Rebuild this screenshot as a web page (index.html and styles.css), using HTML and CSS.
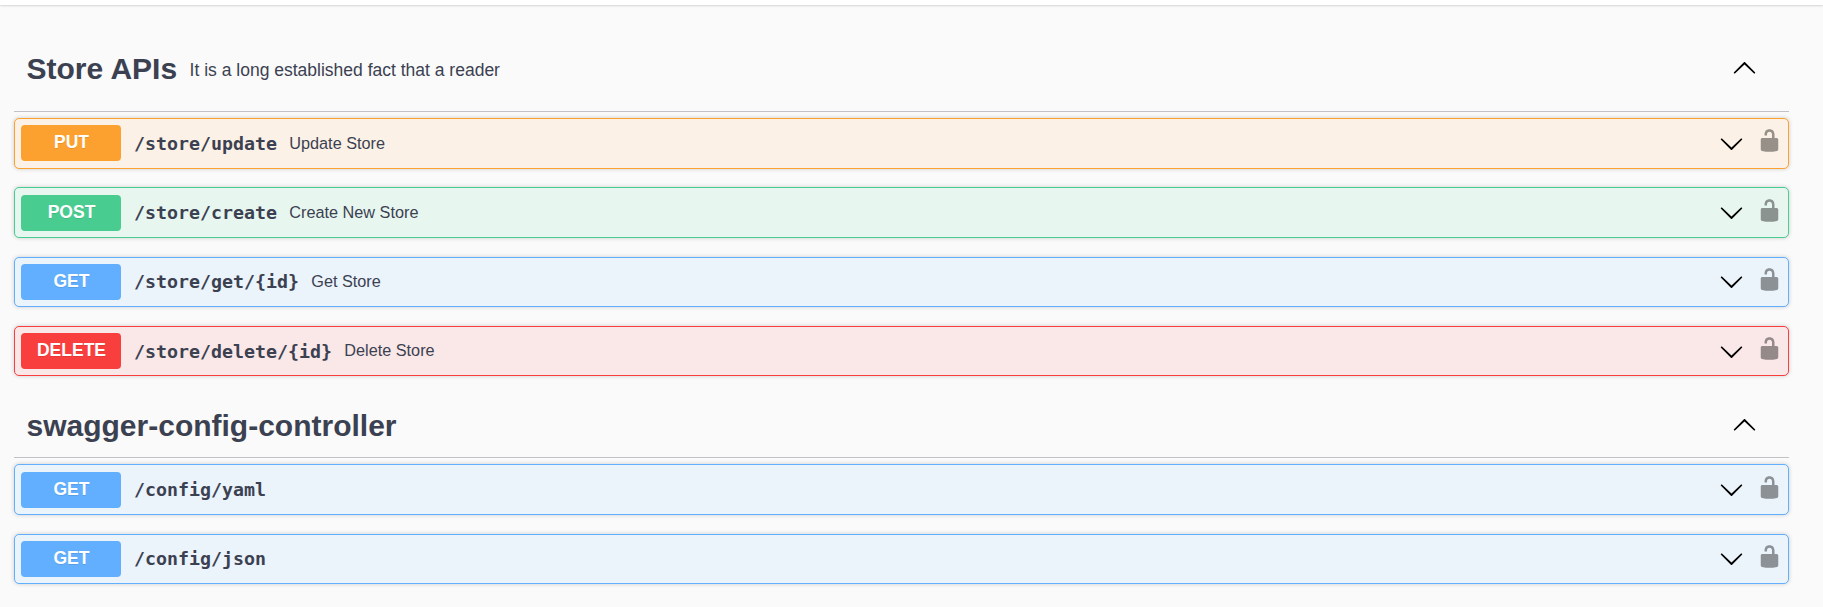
FILE: index.html
```html
<!DOCTYPE html>
<html lang="en">
<head>
<meta charset="utf-8">
<title>Store APIs</title>
<link rel="stylesheet" href="styles.css">
</head>
<body>
<svg class="sprite" aria-hidden="true">
  <symbol id="up" viewBox="0 0 20 20"><path d="M2.582 13.891c-.272.268-.709.268-.979 0s-.271-.701 0-.969l7.908-7.83c.27-.268.707-.268.979 0l7.908 7.83c.27.268.27.701 0 .969c-.271.268-.709.268-.978 0L10 6.75z"/></symbol>
  <symbol id="down" viewBox="0 0 20 20"><path d="M17.418 6.109c.272-.268.709-.268.979 0s.271.701 0 .969l-7.908 7.83c-.27.268-.707.268-.979 0l-7.908-7.83c-.27-.268-.27-.701 0-.969.271-.268.709-.268.979 0L10 13.25z"/></symbol>
  <symbol id="unlocked" viewBox="0 0 20 20"><path d="M15.8 8H14V5.6C14 2.703 12.665 1 10 1 7.334 1 6 2.703 6 5.6V6h2v-.801C8 3.754 8.797 3 10 3c1.203 0 2 .754 2 2.199V8H4c-.553 0-1 .646-1 1.199V17c0 .549.428 1.139.951 1.307l1.197.387C5.672 18.861 6.55 19 7.1 19h5.8c.549 0 1.428-.139 1.951-.307l1.196-.387c.524-.167.953-.757.953-1.306V9.199C17 8.646 16.352 8 15.8 8z"/></symbol>
</svg>
<div class="topbar"></div>
<main class="wrapper">
  <section class="tag-section">
    <header class="tag tag-tall">
      <h3 class="tag-name">Store APIs</h3>
      <p class="tag-desc">It is a long established fact that a reader</p>
      <svg class="icon tag-arrow"><use href="#up"/></svg>
    </header>
    <div class="operations">
      <div class="op put"><span class="method">PUT</span><span class="path">/store/update</span><span class="summary">Update Store</span><svg class="icon arrow"><use href="#down"/></svg><svg class="icon lock"><use href="#unlocked"/></svg></div>
      <div class="op post"><span class="method">POST</span><span class="path">/store/create</span><span class="summary">Create New Store</span><svg class="icon arrow"><use href="#down"/></svg><svg class="icon lock"><use href="#unlocked"/></svg></div>
      <div class="op get"><span class="method">GET</span><span class="path">/store/get/{id}</span><span class="summary">Get Store</span><svg class="icon arrow"><use href="#down"/></svg><svg class="icon lock"><use href="#unlocked"/></svg></div>
      <div class="op delete"><span class="method">DELETE</span><span class="path">/store/delete/{id}</span><span class="summary">Delete Store</span><svg class="icon arrow"><use href="#down"/></svg><svg class="icon lock"><use href="#unlocked"/></svg></div>
    </div>
  </section>
  <section class="tag-section">
    <header class="tag">
      <h3 class="tag-name">swagger-config-controller</h3>
      <svg class="icon tag-arrow"><use href="#up"/></svg>
    </header>
    <div class="operations">
      <div class="op get"><span class="method">GET</span><span class="path">/config/yaml</span><svg class="icon arrow"><use href="#down"/></svg><svg class="icon lock"><use href="#unlocked"/></svg></div>
      <div class="op get"><span class="method">GET</span><span class="path">/config/json</span><svg class="icon arrow"><use href="#down"/></svg><svg class="icon lock"><use href="#unlocked"/></svg></div>
    </div>
  </section>
</main>
</body>
</html>
```
FILE: styles.css
```css
* { box-sizing: border-box; }
html { overflow: hidden; }
body {
  margin: 0;
  background: #fafafa;
  color: #3b4151;
  font-family: "Liberation Sans", Arial, sans-serif;
}
.sprite { display: none; }
.topbar {
  height: 5px;
  background: #fff;
  box-shadow: 0 1px 2px rgba(0, 0, 0, .15);
}
.wrapper {
  width: 1775px;
  margin-left: 14px;
  padding-top: 20px;
}
.tag {
  display: flex;
  align-items: center;
  height: 64.8px;
  padding: 0 32px 0 12.5px;
  border-bottom: 1px solid rgba(59, 65, 81, .3);
}
.tag-tall { height: 87px; }
.tag-name {
  margin: 2px 0 0;
  font-size: 30px;
  line-height: 36px;
}
.tag-desc {
  margin: 3px 0 0;
  padding-left: 12.5px;
  font-size: 17.5px;
  line-height: 22px;
}
.tag-arrow { margin-left: auto; }
.icon {
  flex: none;
  width: 25px;
  height: 25px;
  fill: #000;
}
.operations {
  display: grid;
  gap: 18.8px;
  padding: 6.1px 0 17px;
}
.op {
  display: flex;
  align-items: center;
  height: 50.5px;
  padding: 0 6.5px 0 6px;
  border: 1px solid var(--accent);
  border-radius: 5px;
  background: var(--tint);
  box-shadow: 0 0 4px rgba(0, 0, 0, .19);
}
.put { --accent: #fca130; --tint: #fbf1e6; }
.post { --accent: #49cc90; --tint: #e8f6f0; }
.get { --accent: #61affe; --tint: #ebf3fb; }
.delete { --accent: #f93e3e; --tint: #fae7e7; }
.method {
  width: 100px;
  height: 36px;
  padding-left: 1px;
  border-radius: 4px;
  background: var(--accent);
  color: #fff;
  font-size: 17.5px;
  font-weight: 700;
  line-height: 35.4px;
  text-align: center;
  text-shadow: 0 1px 0 rgba(0, 0, 0, .1);
}
.path {
  padding: 1px 12.3px 0 13px;
  font: 700 18.27px/24px "DejaVu Sans Mono", monospace;
}
.summary {
  font-size: 16.25px;
  line-height: 19.6px;
}
.arrow { margin: 0 13px 0 auto; }
.lock {
  margin-bottom: 5px;
  opacity: .4;
}
```
